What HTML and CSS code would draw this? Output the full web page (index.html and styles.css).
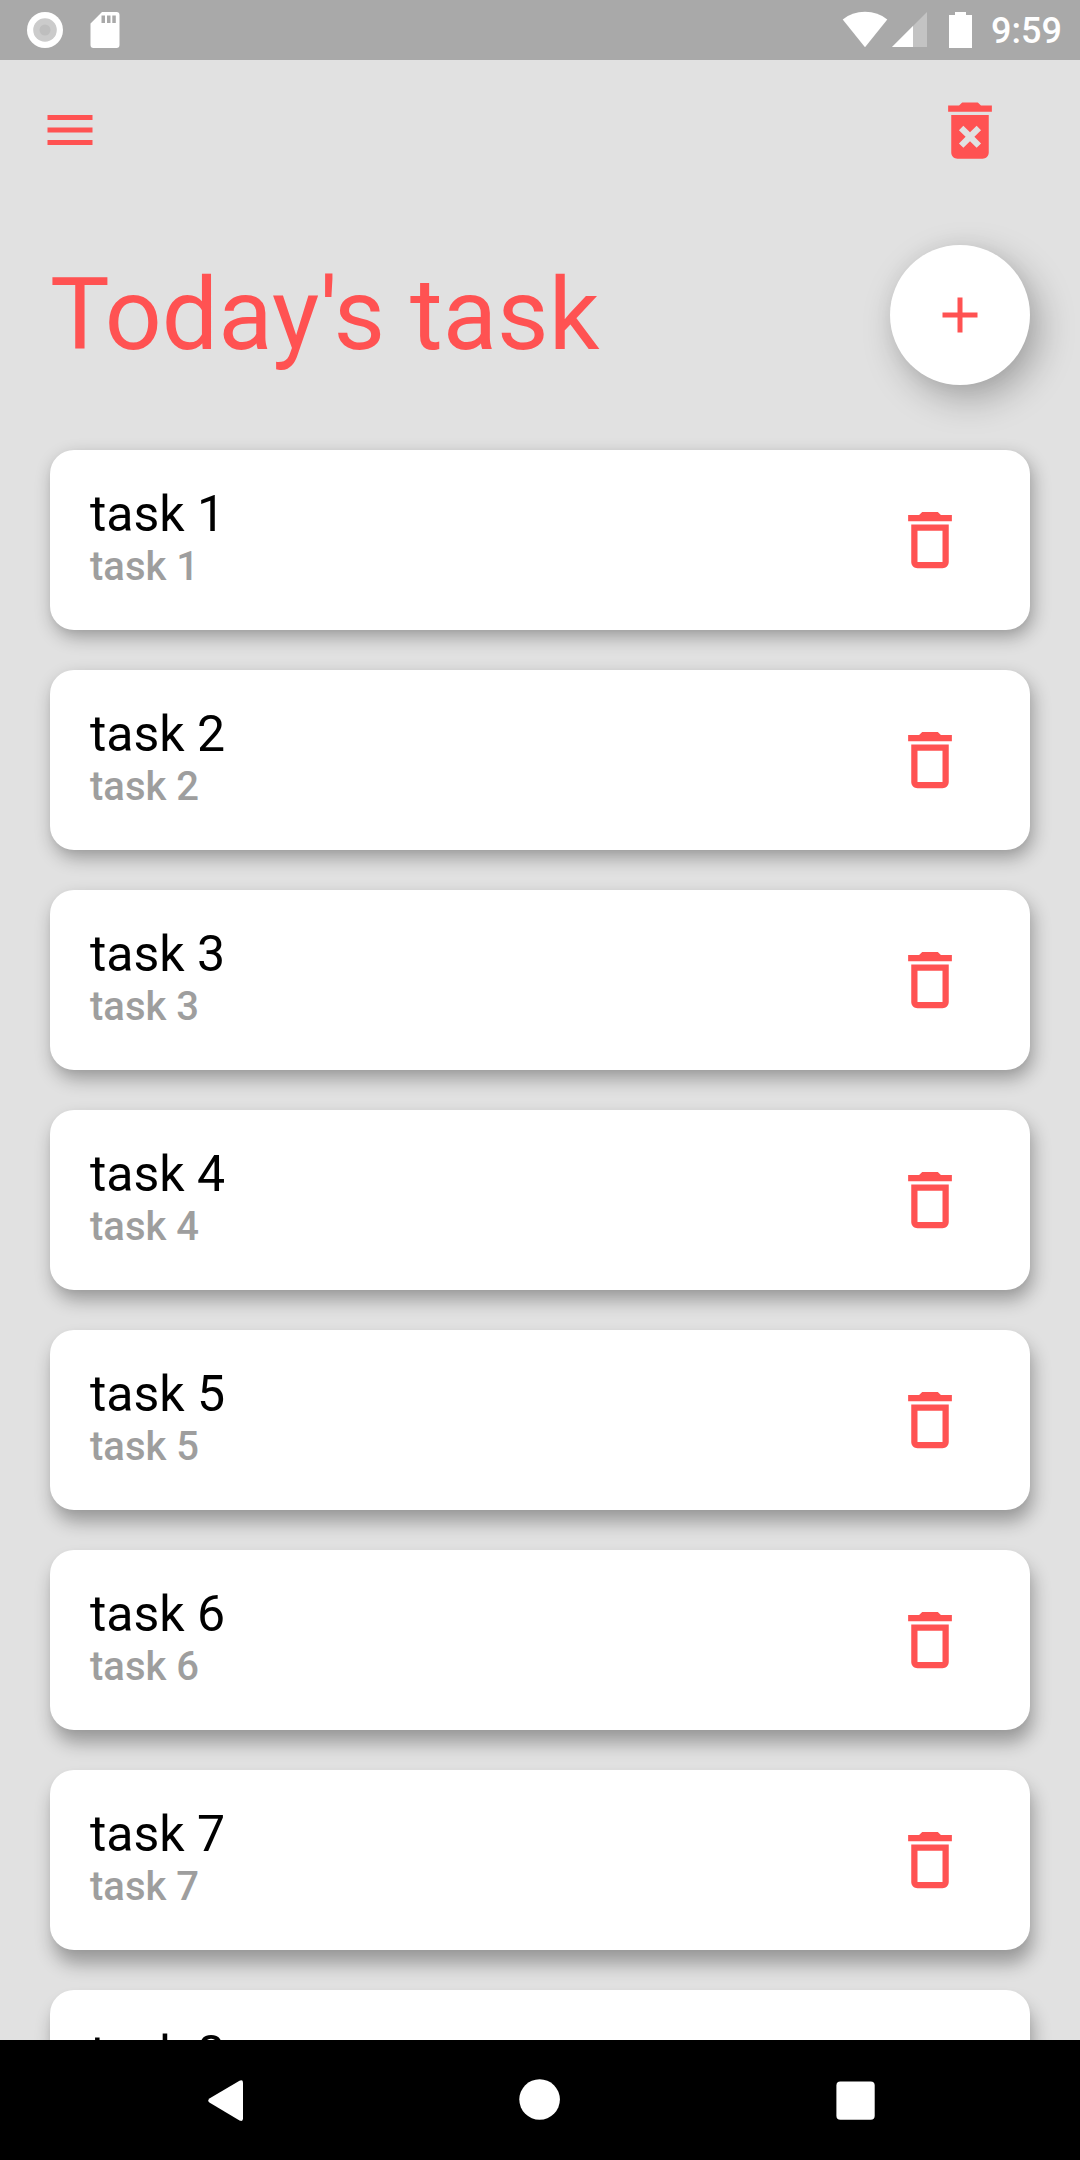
FILE: index.html
```html
<!DOCTYPE html>
<html lang="en">
<head>
<meta charset="utf-8">
<title>Today's task</title>
<link rel="stylesheet" href="styles.css">
</head>
<body>
<svg class="sprite" aria-hidden="true">
  <symbol id="trash" viewBox="0.16 0.16 24 24"><path fill-rule="evenodd" d="M6 19c0 1.1.9 2 2 2h8c1.1 0 2-.9 2-2V7H6v12zM8 9h8v10H8V9zM15.5 4l-1-1h-5l-1 1H5v2h14V4z"/></symbol>
</svg>
<div class="screen">
  <div class="status">
    <svg class="status-left" viewBox="0 0 140 60">
      <circle cx="45" cy="30" r="18" fill="#fff"/>
      <circle cx="45" cy="30" r="11.8" fill="#cbcbcb"/>
      <circle cx="45" cy="30" r="5.5" fill="#bebebe"/>
      <path fill="#fff" fill-rule="evenodd" d="M102 12h14.500q3 0 3 3v30q0 3-3 3H93.500q-3 0-3-3V23.500zM101.500 15.500v7.500h3.500v-7.500zM107 15.500v7.500h3.500v-7.500zM112.300 15.500v7.500h3.500v-7.500z"/>
    </svg>
    <div class="status-right">
      <svg class="status-signals" viewBox="840 0 140 60">
        <path fill="#fff" d="M865 47.300L842.700 19.400Q852 11.700 865 11.700T887.300 19.400z"/>
        <path fill="#c3c3c3" d="M927 12v35h-35z"/>
        <path fill="#fff" d="M913 26v21h-21z"/>
        <path fill="#fff" d="M955 15v-3h11v3h6v33h-23V15z"/>
      </svg>
      <span class="clock">9:59</span>
    </div>
  </div>

  <header class="toolbar">
    <svg class="icon-menu" viewBox="0 0 24 24"><path d="M3 18h18v-2H3v2zm0-5h18v-2H3v2zm0-7v2h18V6H3z"/></svg>
    <svg class="icon-trash" viewBox="0.16 0 24 24"><path d="M6 19c0 1.100.9 2 2 2h8c1.100 0 2-.9 2-2V7H6v12zm2.460-7.120l1.410-1.410L12 12.590l2.120-2.120 1.410 1.410L13.410 14l2.120 2.120-1.410 1.410L12 15.410l-2.120 2.120-1.410-1.410L10.590 14l-2.130-2.120zM15.500 4l-1-1h-5l-1 1H5v2h14V4z"/></svg>
  </header>

  <div class="heading">
    <h1>Today's task</h1>
    <button class="add" aria-label="Add task"><svg viewBox="0 0 24 24"><path d="M19 13h-6v6h-2v-6H5v-2h6V5h2v6h6v2z"/></svg></button>
  </div>

  <main class="list">
    <article class="card"><div><h2>task 1</h2><p>task 1</p></div><svg class="icon-trash"><use href="#trash"/></svg></article>
    <article class="card"><div><h2>task 2</h2><p>task 2</p></div><svg class="icon-trash"><use href="#trash"/></svg></article>
    <article class="card"><div><h2>task 3</h2><p>task 3</p></div><svg class="icon-trash"><use href="#trash"/></svg></article>
    <article class="card"><div><h2>task 4</h2><p>task 4</p></div><svg class="icon-trash"><use href="#trash"/></svg></article>
    <article class="card"><div><h2>task 5</h2><p>task 5</p></div><svg class="icon-trash"><use href="#trash"/></svg></article>
    <article class="card"><div><h2>task 6</h2><p>task 6</p></div><svg class="icon-trash"><use href="#trash"/></svg></article>
    <article class="card"><div><h2>task 7</h2><p>task 7</p></div><svg class="icon-trash"><use href="#trash"/></svg></article>
    <article class="card"><div><h2>task 8</h2></div></article>
  </main>

  <nav class="navbar">
    <svg viewBox="0 0 80 80"><path d="M24.800 42.800q-3.200-2.300 0-4.600L54.500 20.800q3.500-1.600 3.500 2V58.500q0 3.600-3.500 2z"/></svg>
    <svg viewBox="0 0 80 80"><circle cx="39.600" cy="39.500" r="20.300"/></svg>
    <svg viewBox="0 0 80 80"><rect x="21.400" y="21.400" width="38.300" height="38.300" rx="4"/></svg>
  </nav>
</div>
</body>
</html>
```
FILE: styles.css
```css
* {
  box-sizing: border-box;
  margin: 0;
  padding: 0;
}

body {
  font-family: Roboto, sans-serif;
  background: #e1e1e1;
}

svg {
  display: block;
  flex: none;
}

.sprite {
  display: none;
}

.screen {
  display: flex;
  flex-direction: column;
  width: 1080px;
  height: 2160px;
  overflow: hidden;
}

.status {
  display: flex;
  flex: none;
  justify-content: space-between;
  height: 60px;
  padding-right: 20px;
  background: #a9a9a9;
}

.status-left,
.status-signals {
  width: 140px;
  height: 60px;
}

.status-right {
  display: flex;
  gap: 11px;
}

.clock {
  width: 69px;
  color: #fff;
  font-size: 36px;
  font-weight: 500;
  line-height: 63px;
}

.toolbar {
  display: flex;
  flex: none;
  align-items: center;
  justify-content: space-between;
  height: 140px;
  padding: 0 72px 0 40px;
  fill: #ff5252;
}

.icon-menu {
  width: 60px;
  height: 60px;
}

.icon-trash {
  width: 75px;
  height: 75px;
  fill: #ff5252;
}

.heading {
  display: flex;
  flex: none;
  align-items: center;
  justify-content: space-between;
  height: 230px;
  padding: 0 50px;
}

h1 {
  color: #ff5252;
  font-size: 100px;
  font-weight: 400;
  line-height: 118px;
}

.add {
  display: flex;
  align-items: center;
  justify-content: center;
  width: 140px;
  height: 140px;
  border: 0;
  border-radius: 50%;
  background: #fff;
  box-shadow: 9px 13px 36px rgba(0, 0, 0, .28), 0 0 20px rgba(0, 0, 0, .04);
}

.add svg {
  width: 60px;
  height: 60px;
  fill: #ff5252;
}

.list {
  display: flex;
  flex: 1;
  flex-direction: column;
  gap: 40px;
  min-height: 0;
  padding: 20px 50px 0;
  overflow: hidden;
}

.card {
  --drop: 7px;
  display: flex;
  flex: none;
  justify-content: space-between;
  align-items: flex-start;
  height: 180px;
  padding: 35px 62px 0 40px;
  border-radius: 24px;
  background: #fff;
  box-shadow: 3px var(--drop) 18px rgba(0, 0, 0, .31), 0 2px 6px rgba(0, 0, 0, .03);
}

.card .icon-trash {
  margin-top: 18px;
}

/* Cards lower on the screen cast a longer shadow. */
.card:nth-child(2) { --drop: 8px; }
.card:nth-child(3) { --drop: 9px; }
.card:nth-child(4) { --drop: 10px; }
.card:nth-child(5) { --drop: 12px; }
.card:nth-child(6) { --drop: 13px; }
.card:nth-child(7) { --drop: 14px; }
.card:nth-child(8) { --drop: 15px; }

h2 {
  color: #000;
  font-size: 50px;
  font-weight: 400;
  line-height: 58px;
}

.card p {
  color: #9e9e9e;
  font-size: 40px;
  font-weight: 500;
  line-height: 47px;
}

.navbar {
  display: flex;
  flex: none;
  align-items: center;
  justify-content: center;
  gap: 235px;
  height: 120px;
  background: #000;
  fill: #fff;
}

.navbar svg {
  width: 80px;
  height: 80px;
}
```
